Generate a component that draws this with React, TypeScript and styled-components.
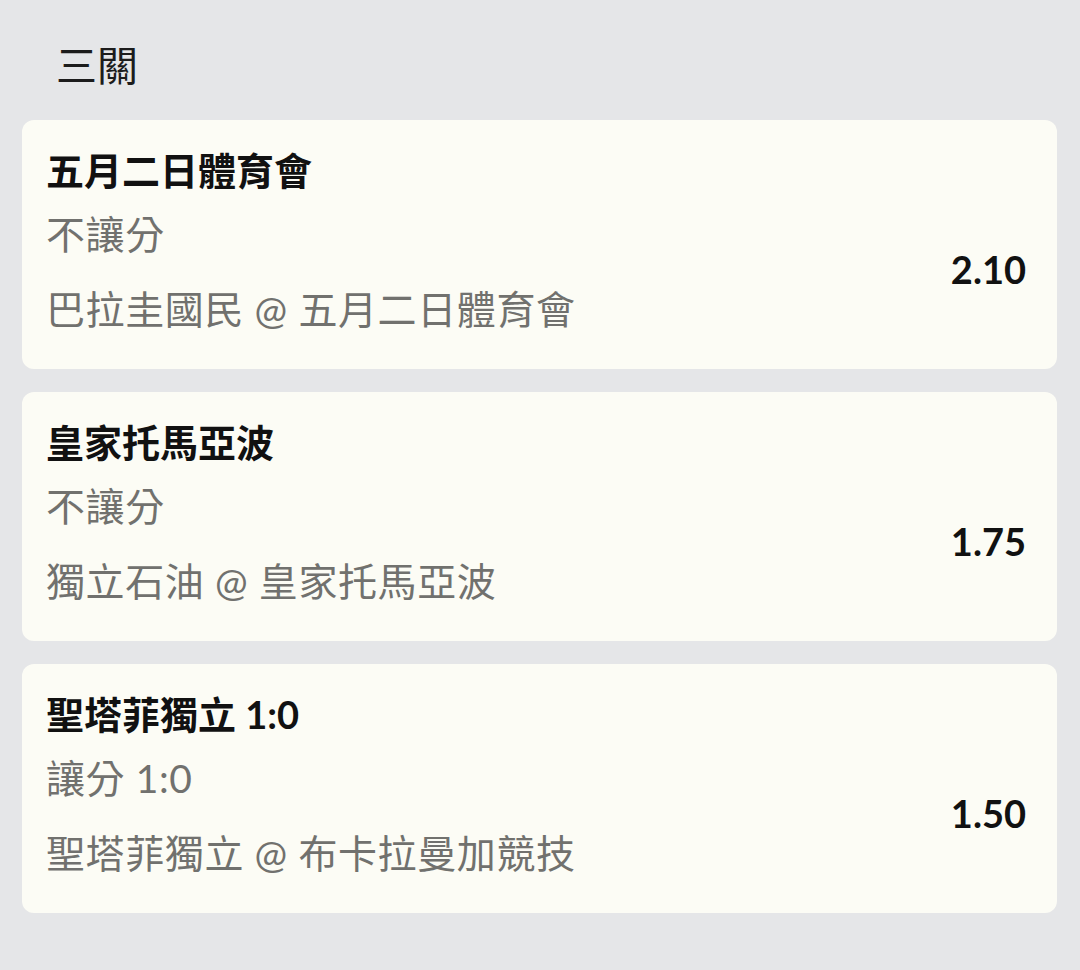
import React from "react";
import styled, { createGlobalStyle } from "styled-components";

const Global = createGlobalStyle`
  html, body { margin: 0; padding: 0; background: #e5e6e8; }
  body { font-family: Lato, "Noto Sans CJK TC", sans-serif; }
`;

const Page = styled.div`
  width: 1080px;
  min-height: 970px;
  box-sizing: border-box;
  padding: 0 23px 0 22px;
  background: #e5e6e8;
  display: flex;
  flex-direction: column;
`;

const Heading = styled.h1`
  margin: 0;
  padding: 40px 0 0 34px;
  height: 120px;
  box-sizing: border-box;
  font-size: 41px;
  line-height: 52px;
  font-weight: 400;
  color: #1c1c1c;
`;

const List = styled.div`
  display: flex;
  flex-direction: column;
  gap: 23px;
`;

const Card = styled.div`
  height: 249px;
  box-sizing: border-box;
  background: #fcfcf5;
  border-radius: 12px;
  padding: 27px 31px 0 24px;
  display: flex;
  align-items: center;
`;

const Info = styled.div`
  flex: 1;
  display: flex;
  flex-direction: column;
  align-self: flex-start;
`;

const Title = styled.div`
  font-size: 38px;
  line-height: 46px;
  font-weight: 700;
  color: #111;
`;

const Line = styled.div<{ $gap: number }>`
  margin-top: ${(p) => p.$gap}px;
  font-size: 39px;
  line-height: 46px;
  letter-spacing: 0.6px;
  font-weight: 400;
  color: #71716e;
`;

const Odds = styled.div`
  font-size: 38px;
  font-weight: 700;
  color: #111;
  padding-top: 22px;
`;

const bets = [
  { title: "五月二日體育會", type: "不讓分", match: "巴拉圭國民 @ 五月二日體育會", odds: "2.10" },
  { title: "皇家托馬亞波", type: "不讓分", match: "獨立石油 @ 皇家托馬亞波", odds: "1.75" },
  { title: "聖塔菲獨立 1:0", type: "讓分 1:0", match: "聖塔菲獨立 @ 布卡拉曼加競技", odds: "1.50" },
];

export default function App() {
  return (
    <Page>
      <Global />
      <Heading>三關</Heading>
      <List>
        {bets.map((b) => (
          <Card key={b.title}>
            <Info>
              <Title>{b.title}</Title>
              <Line $gap={18}>{b.type}</Line>
              <Line $gap={29}>{b.match}</Line>
            </Info>
            <Odds>{b.odds}</Odds>
          </Card>
        ))}
      </List>
    </Page>
  );
}
